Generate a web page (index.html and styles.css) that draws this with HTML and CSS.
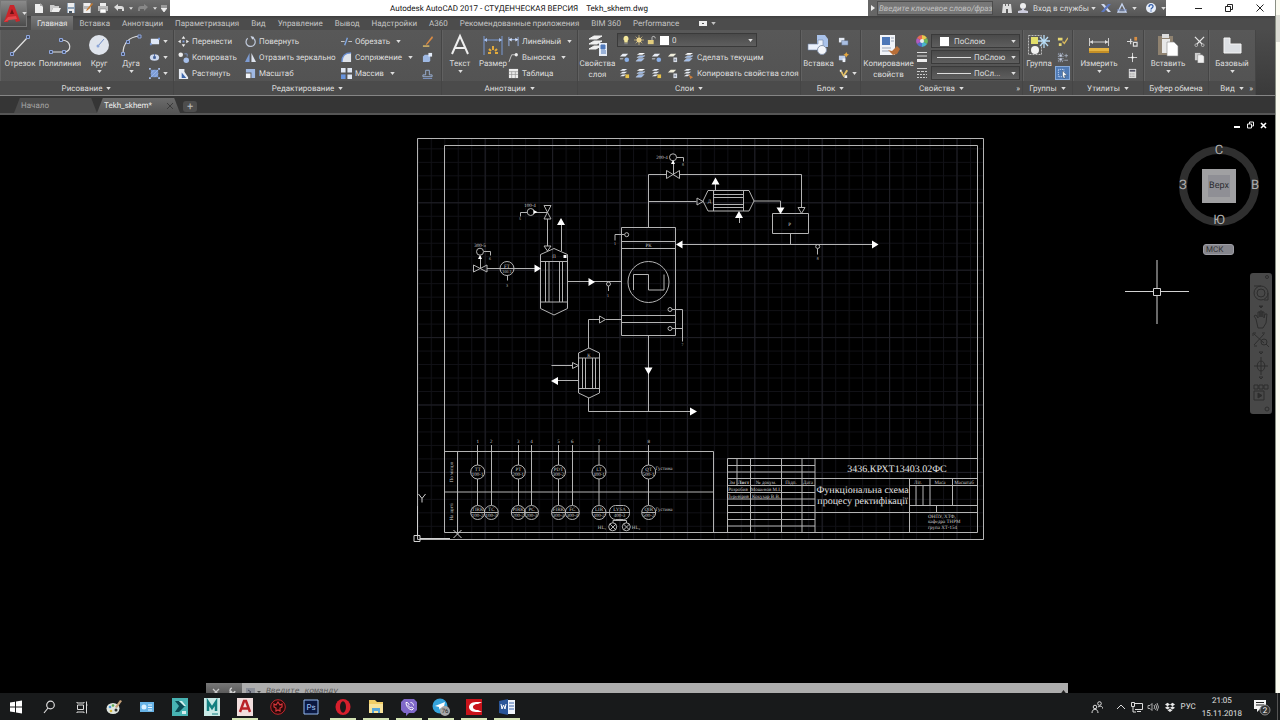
FILE: index.html
```html
<!DOCTYPE html>
<html lang="ru">
<head>
    <meta charset="UTF-8">
    <meta name="viewport" content="width=device-width, initial-scale=1.0">
    <title>Autodesk AutoCAD 2017</title>
    <link rel="stylesheet" href="styles.css">
</head>
<body>
    <!-- иконки -->
    <svg class="sprite" aria-hidden="true">
        <symbol id="down" viewBox="0 0 6 4"><path d="M0 0h6L3 4z" fill="currentColor"/></symbol>
        <symbol id="new" viewBox="0 0 12 12"><path d="M2 2h6l2 3v6H2z" fill="#eee"/><path d="M7 1l3 3H7z" fill="#aaa"/></symbol>
        <symbol id="open" viewBox="0 0 12 12"><path d="M1 3h4l1 1h4v2H4l-2 4H1z" fill="#ccc"/><path d="M4 6h8l-2 4H2z" fill="#eee"/></symbol>
        <symbol id="save" viewBox="0 0 12 12"><path d="M2 1h8v10H2z" fill="#8fa3b8"/><path d="M3 1h6v4H3zM3 7h6v4H3z" fill="#eee"/><path d="M4 9h3v2H4z" fill="#456"/></symbol>
        <symbol id="saveas" viewBox="0 0 12 12"><path d="M2 1h8v10H2z" fill="#b8b8b8"/><path d="M3 1h6v3H3zM3 7h6v4H3z" fill="#eee"/><path d="M11 1L6 7l-1 2 2-1 5-6z" fill="#c97a2c"/></symbol>
        <symbol id="print" viewBox="0 0 12 12"><path d="M3 1h6v3H3z" fill="#eee"/><path d="M1 4h10v5H1z" fill="#bbb"/><path d="M3 7h6v4H3z" fill="#fff" stroke="#777" stroke-width=".5"/></symbol>
        <symbol id="undo" viewBox="0 0 12 12"><path d="M1 5l4-3v2h3c2 0 3 1 3 3v2H9V7H5v2z" fill="#ddd"/></symbol>
        <symbol id="redo" viewBox="0 0 12 12"><path d="M11 5L7 2v2H4C2 4 1 5 1 7v2h2V7h4v2z" fill="#888"/></symbol>
        <symbol id="binoc" viewBox="0 0 12 12"><path d="M2 2h2v2h1V2h2v2h1V2h2l1 9H7V7H5v4H1z" fill="#ddd"/></symbol>
        <symbol id="person" viewBox="0 0 12 12"><circle cx="6" cy="4" r="3" fill="#eee"/><path d="M5 6h2v2l4 1v2H1V9l4-1z" fill="#ccd"/></symbol>
        <symbol id="exch" viewBox="0 0 12 12"><path d="M1 2h3l7 8H8z" fill="#cfd8ee"/><path d="M8 2h3L4 10H1z" fill="#5d78c0"/></symbol>
        <symbol id="a360" viewBox="0 0 12 12"><path d="M6 2l4 8H2z" fill="none" stroke="#c5d3ee" stroke-width="1.4"/><path d="M1 8h10" stroke="#7c93cc"/></symbol>
        <symbol id="help" viewBox="0 0 12 12"><circle cx="6" cy="6" r="5" fill="#e6edf8"/><path d="M4 5c0-3 4-3 4-.6C8 6 6 6 6 7.500M6 8.500v1" fill="none" stroke="#345ea8" stroke-width="1.3"/></symbol>

        <symbol id="line" viewBox="0 0 24 24"><path d="M4 21L20 4" stroke="#e4e4e4" stroke-width="1.200"/><path d="M2.500 19.500h3v3h-3zM18.500 2.500h3v3h-3z" fill="#42506c" stroke="#8fa6dc"/></symbol>
        <symbol id="pline" viewBox="0 0 24 24"><path d="M3 19h13c8 0 8-11-2-12" fill="none" stroke="#ddd" stroke-width="1.200"/><path d="M1.500 17.500h3v3h-3zM14.500 17.500h3v3h-3zM11.500 5.500h3v3h-3z" fill="#42506c" stroke="#8fa6dc"/></symbol>
        <symbol id="circle" viewBox="0 0 24 24"><circle cx="12" cy="12" r="10" fill="#dfe4ec"/><path d="M11 13l6-7" stroke="#6c8ac4"/><circle cx="11" cy="13" r="1.500" fill="#8ba5d8"/></symbol>
        <symbol id="arc" viewBox="0 0 24 24"><path d="M4 21C4 10 9 4 21 3" fill="none" stroke="#ddd" stroke-width="1.200"/><path d="M2.500 19.500h3v3h-3zM7.500 7.500h3v3h-3zM19 2h3v3h-3z" fill="#42506c" stroke="#8fa6dc"/></symbol>
        <symbol id="rect" viewBox="0 0 12 12"><path d="M2 3h9v6H2z" fill="#dfe8f8"/><path d="M1 8h2v2H1zM10 2h2v2h-2z" fill="#7596d8"/></symbol>
        <symbol id="ell" viewBox="0 0 12 12"><ellipse cx="6" cy="6" rx="5" ry="3.500" fill="#ccd8ee"/><path d="M6 2v4M5 5h2v2H5z" fill="#35598f" stroke="#49659c"/></symbol>
        <symbol id="hatch" viewBox="0 0 12 12"><path d="M2 2h8v8H2z" fill="#7c9cd6"/><path d="M2 6l4-4M2 10l8-8M6 10l4-4" stroke="#a9c4f2" stroke-width=".7"/><path d="M0 0h2v2H0zM10 0h2v2h-2zM0 10h2v2H0zM10 10h2v2h-2z" fill="#a5bce8"/></symbol>
        <symbol id="move" viewBox="0 0 12 12"><path d="M6 0l2 3H4zM6 12l2-3H4zM0 6l3-2v4zM12 6L9 4v4z" fill="#eee"/><path d="M5 5h2v2H5z" fill="#7fa0e0"/></symbol>
        <symbol id="copy" viewBox="0 0 12 12"><circle cx="3" cy="3" r="2.500" fill="#eee"/><circle cx="9" cy="9" r="3" fill="#a6bfea"/><path d="M7 2h3v3" fill="none" stroke="#7d97c8"/></symbol>
        <symbol id="stretch" viewBox="0 0 12 12"><path d="M1 1h6v3l4 6v2H1z" fill="#e6ebf4"/><path d="M4 5l5 6H4z" fill="#3c66ac"/></symbol>
        <symbol id="rotate" viewBox="0 0 12 12"><path d="M3 2.500A5 5 0 1 0 8.500 2" fill="none" stroke="#bcc5d6" stroke-width="1.400"/><path d="M6 0l4 1-2 3z" fill="#cdd6e6"/></symbol>
        <symbol id="mirror" viewBox="0 0 12 12"><path d="M5 1v10H0z" fill="#7d9bd2"/><path d="M7 1v10h5z" fill="#dde3ee"/></symbol>
        <symbol id="scale" viewBox="0 0 12 12"><path d="M1 1h10v10H7V5H1z" fill="#9fb8e2"/><path d="M1 6h5v5H1z" fill="#f2f5fa"/></symbol>
        <symbol id="trim" viewBox="0 0 12 12"><path d="M0 6h4M8 6h4" stroke="#ccc"/><path d="M4 10L7 2" stroke="#7fa7e4" stroke-width="1.500"/></symbol>
        <symbol id="fillet" viewBox="0 0 12 12"><path d="M1 11C1 4 5 1 11 1v10z" fill="#dfe3ea"/><path d="M1 11C1 4 5 1 11 1" fill="none" stroke="#6e93d8" stroke-width="1.500"/></symbol>
        <symbol id="array" viewBox="0 0 12 12"><path d="M0 0h5v5H0zM7 0h5v5H7zM7 7h5v5H7z" fill="#dfe6f2"/><path d="M0 7h5v5H0z" fill="#6793dc"/></symbol>
        <symbol id="pencil" viewBox="0 0 12 12"><path d="M11 0l1 2-6 7-2 1 1-2z" fill="#d98b45"/><path d="M1 11h7" stroke="#e6c068" stroke-width="1.500"/></symbol>
        <symbol id="explode" viewBox="0 0 12 12"><path d="M1 5l2-2h6v6l-1 2H1z" fill="#9eb9e4"/><path d="M7 1h4v4H7z" fill="#e4ecfa"/></symbol>
        <symbol id="offset" viewBox="0 0 12 12"><path d="M1 9.500h10V7.500H8V2.500H4v5H1z" fill="none" stroke="#9bb2d8"/><path d="M1 11.500h10" stroke="#7d97c8"/></symbol>
        <symbol id="text" viewBox="0 0 24 24"><path d="M4 21L12 3l8 18M7 15h10" fill="none" stroke="#eee" stroke-width="2"/></symbol>
        <symbol id="dim" viewBox="0 0 24 24"><path d="M3 3v19M21 3v19M3 7h18" stroke="#7b9ad4" fill="none"/><path d="M3 7l3-2v4zM21 7l-3-2v4z" fill="#a9c2f0"/><path d="M12 13v4M8 16l2 2M16 16l-2 2M7 20h3M14 20h3" stroke="#e2aa3c" stroke-width="2"/></symbol>
        <symbol id="linear" viewBox="0 0 12 12"><path d="M1 1v10M11 1v10M1 4h10" stroke="#9ab6ea" fill="none"/><path d="M1 4l3-2v4zM11 4L8 2v4z" fill="#dde8ff"/></symbol>
        <symbol id="leader" viewBox="0 0 12 12"><path d="M1 11L4 3h4" fill="none" stroke="#ccc"/><circle cx="9" cy="3" r="1.800" fill="#eee"/></symbol>
        <symbol id="table" viewBox="0 0 12 12"><path d="M1 1h10v10H1z" fill="#eee"/><path d="M1 4h10M1 7h10M4 4v7M8 4v7" stroke="#8b8b8b" stroke-width=".7"/></symbol>
        <symbol id="layers" viewBox="0 0 24 24"><path d="M3 6l5-3h8l-5 3zM3 11l5-3h8l-5 3zM3 16l5-3h7l-5 3z" fill="#f0f0f0" stroke="#f0f0f0"/><path d="M13 10h8v13h-8z" fill="#e6ecf6"/><path d="M15 12h4v4h-4zM15 18h5M15 20h5" fill="#4f78ba" stroke="#4f78ba"/></symbol>
        <symbol id="bulb" viewBox="0 0 12 12"><path d="M6 1a3.500 3.500 0 0 1 2 6v2H4V7a3.500 3.500 0 0 1 2-6z" fill="#f4e79b"/><path d="M4 10h4v1H4z" fill="#999"/></symbol>
        <symbol id="sun" viewBox="0 0 12 12"><circle cx="6" cy="6" r="3" fill="#f0d890"/><path d="M6 0v12M0 6h12M2 2l8 8M10 2l-8 8" stroke="#e6cd86" stroke-width=".8"/></symbol>
        <symbol id="lock" viewBox="0 0 12 12"><path d="M1 6h7v5H1z" fill="#e2cd7e"/><path d="M6 6V3c0-2 4-2 4 1" fill="none" stroke="#ccc"/></symbol>
        <symbol id="lay1" viewBox="0 0 12 12"><path d="M1 5l3-3h6L7 5zM1 7h4l-1 1H1z" fill="#e8edf6"/><circle cx="8.500" cy="8.500" r="2.500" fill="#8bb0e8"/></symbol>
        <symbol id="lay2" viewBox="0 0 12 12"><path d="M1 3l3-2h5L6 3zM1 6l3-2h5L6 6zM1 9l3-2h4L5 9z" fill="#e8edf6"/><path d="M7 7h4v4H7z" fill="#e8c24b"/></symbol>
        <symbol id="lay3" viewBox="0 0 12 12"><path d="M1 5l3-3h6L7 5z" fill="#f0eedc"/><path d="M7 6h4v5H7z" fill="#d9dee8"/><path d="M8 7.500h2v2H8z" fill="#8b96a8"/></symbol>
        <symbol id="lay4" viewBox="0 0 12 12"><path d="M2 3l3-2h6L8 3z" fill="#fff"/><path d="M2 6l3-2h6L8 6zM1 10l3-3h6l-3 3z" fill="#9cb9e6" stroke="#dce6f8" stroke-width=".4"/></symbol>
        <symbol id="lay5" viewBox="0 0 12 12"><path d="M1 3l3-2h5L6 3zM1 6l3-2h5L6 6zM1 9l3-2h4L5 9z" fill="#e8edf6"/><path d="M6 7l5 3-3 2z" fill="#cc7e3c"/></symbol>
        <symbol id="insert" viewBox="0 0 24 24"><path d="M10 2h8l3 4v8H10z" fill="#a9c2ea"/><path d="M1 11h10V7h5v10H1z" fill="#eaf0fa" stroke="#7084a6" stroke-width=".6"/><circle cx="15" cy="17" r="4.500" fill="#f4f6fa" stroke="#8594ac"/></symbol>
        <symbol id="blk1" viewBox="0 0 12 12"><path d="M1 2h6v5H1z" fill="#e4eaf4"/><path d="M4 5h7v5H4z" fill="#a9bfe2" stroke="#53627c" stroke-width=".5"/></symbol>
        <symbol id="blk2" viewBox="0 0 12 12"><path d="M1 4h7v5H1z" fill="#bccdea"/><path d="M5 7h3v4H5z" fill="#edf2fa"/><path d="M9 0l1 2 2 1-2 1-1 2-1-2-2-1 2-1z" fill="#e5a73e"/></symbol>
        <symbol id="blk3" viewBox="0 0 12 12"><path d="M2 3l3 1 1 3 3-5 2 1-5 7z" fill="#e3c168"/><path d="M2 2h2v2H2zM7 8h3v3H7z" fill="#eee"/></symbol>
        <symbol id="match" viewBox="0 0 24 24"><path d="M3 2h15v20H3z" fill="#f2f4f8"/><path d="M5 4h8v8H5z" fill="#4d77b8"/><path d="M14 5h3M14 8h3M5 15h9M5 18h7" stroke="#9aa5b8"/><path d="M11 17l5 5 4-1 3-5-3-3-5 5z" fill="#b76e38"/></symbol>
        <symbol id="wheel" viewBox="0 0 12 12"><path d="M6 6V0a6 6 0 0 1 5 3z" fill="#eac84c"/><path d="M6 6l5-3a6 6 0 0 1 0 6z" fill="#6cb65c"/><path d="M6 6l5 3a6 6 0 0 1-5 3z" fill="#4ab4cc"/><path d="M6 6v6a6 6 0 0 1-5-3z" fill="#5072cc"/><path d="M6 6L1 9a6 6 0 0 1 0-6z" fill="#b05ac0"/><path d="M6 6L1 3a6 6 0 0 1 5-3z" fill="#e46a58"/><circle cx="6" cy="6" r="2" fill="#eee"/></symbol>
        <symbol id="weight" viewBox="0 0 12 12"><path d="M1 1.500h10M1 5h10" stroke="#ddd"/><path d="M1 9.500h10" stroke="#eee" stroke-width="3"/></symbol>
        <symbol id="ltype" viewBox="0 0 12 12"><path d="M1 1.500h10" stroke="#ccc"/><path d="M1 4.500h10" stroke="#ccc" stroke-dasharray="3 1"/><path d="M1 7.500h10M1 10.500h10" stroke="#ccc" stroke-dasharray="2 1"/></symbol>
        <symbol id="group" viewBox="0 0 24 24"><path d="M1.500 2.500h13v19h-13z" fill="none" stroke="#bbb" stroke-dasharray="2 1"/><path d="M4 4h7v7H4z" fill="#e2de6a"/><circle cx="8" cy="17" r="4" fill="#f2f2f2"/><path d="M17 2v13M11 8h12M13 4l8 9M21 4l-8 9" stroke="#b7dcf6" stroke-width="1.300"/></symbol>
        <symbol id="ungroup" viewBox="0 0 12 12"><path d="M1 2h5v3H1zM2 8h3v3H2z" fill="#e5d673"/><path d="M6 6l2 2 4-6" fill="none" stroke="#d9b95c" stroke-width="1.500"/></symbol>
        <symbol id="gedit" viewBox="0 0 12 12"><path d="M1.500 1.500h5v9h-5z" fill="none" stroke="#a9b5cc" stroke-dasharray="1 1"/><path d="M3 3h2v2H3zM3 7h2v2H3zM8 4h4M10 2v4M8 9h4" fill="#ccd" stroke="#bcc8dc" stroke-width=".7"/></symbol>
        <symbol id="gsel" viewBox="0 0 12 12"><path d="M1.500 1.500h6v8h-6z" fill="none" stroke="#d8e6ff" stroke-dasharray="1 1"/><path d="M6 3l5 5H8l1 3-2 0-1-3z" fill="#fff" stroke="#345" stroke-width=".5"/></symbol>
        <symbol id="measure" viewBox="0 0 24 24"><path d="M2.500 5v8M21.500 5v8M3 9h18" stroke="#ccc"/><path d="M3 9l3-2v4zM21 9l-3-2v4z" fill="#ddd"/><path d="M2 15h20v5H2z" fill="#e5b443"/><path d="M2 18h20v2H2z" fill="#c48f26"/></symbol>
        <symbol id="quick" viewBox="0 0 12 12"><path d="M0 6h6M4 3v6M7 7h4v4H7z" fill="none" stroke="#ddd" stroke-width="1.300"/><path d="M8 1h3v4H8z" fill="#d88e44"/></symbol>
        <symbol id="point" viewBox="0 0 12 12"><path d="M6 1v10M1 6h10" stroke="#ddd"/><path d="M5 5h2v2H5z" fill="#fff"/></symbol>
        <symbol id="calc" viewBox="0 0 12 12"><path d="M2 1h8v10H2z" fill="#ddd"/><path d="M3 2h6v2H3z" fill="#556"/><path d="M3 6.500h6M3 9h6" stroke="#777" stroke-dasharray="1 1"/></symbol>
        <symbol id="paste" viewBox="0 0 24 24"><path d="M2 3h15v19H2z" fill="#8f8270"/><path d="M6 1h7v4H6z" fill="#ddd"/><path d="M6 6h8v14H6z" fill="#e8e8e8"/><path d="M11 9h7l4 4v10H11z" fill="#fff" stroke="#888" stroke-width=".6"/></symbol>
        <symbol id="cut" viewBox="0 0 12 12"><path d="M1 1l8 8M11 1L3 9" stroke="#e6e6e6" stroke-width="1.300"/><circle cx="2.500" cy="10" r="1.500" fill="none" stroke="#bbb"/><circle cx="9.500" cy="10" r="1.500" fill="none" stroke="#bbb"/></symbol>
        <symbol id="copyclip" viewBox="0 0 12 12"><path d="M1 1h6v8H1z" fill="#ccc"/><path d="M4 3h5l2 2v7H4z" fill="#f0f0f0" stroke="#777" stroke-width=".5"/></symbol>
        <symbol id="base" viewBox="0 0 24 24"><path d="M4 5h6v6h11v9H4z" fill="#dcdfe3" stroke="#f5f5f5"/></symbol>
    </svg>

    <div class="screen">
        <main class="app">
            <header class="top">
                <button class="app-button" aria-label="Меню приложения">
                    <svg width="18" height="20" viewBox="0 0 18 20"><path d="M1 18L7 1h4l6 16-4 1-2-5H6l-1 5z" fill="#c9262b"/><path d="M7 10l2-5 2 5z" fill="#6d1216"/><path d="M1 18l4-5 8-1 1 3-8 1z" fill="#e3474b"/></svg>
                    <svg class="arrow"><use href="#down"/></svg>
                </button>
                <div class="top-main">
                    <div class="titlebar">
                        <div class="quick">
                            <button aria-label="Создать"><svg class="ic"><use href="#new"/></svg></button>
                            <button aria-label="Открыть"><svg class="ic"><use href="#open"/></svg></button>
                            <button aria-label="Сохранить"><svg class="ic"><use href="#save"/></svg></button>
                            <button aria-label="Сохранить как"><svg class="ic"><use href="#saveas"/></svg></button>
                            <button aria-label="Печать"><svg class="ic"><use href="#print"/></svg></button>
                            <button aria-label="Отменить"><svg class="ic"><use href="#undo"/></svg></button>
                            <svg class="arrow"><use href="#down"/></svg>
                            <button aria-label="Повторить"><svg class="ic"><use href="#redo"/></svg></button>
                            <svg class="arrow"><use href="#down"/></svg>
                            <svg class="arrow more" viewBox="0 0 6 7"><path d="M0 1h6M0 3h6l-3 4z" fill="#eee" stroke="#eee" stroke-width=".8"/></svg>
                        </div>
                        <div class="title"><span>Autodesk AutoCAD 2017 - СТУДЕНЧЕСКАЯ ВЕРСИЯ</span><span>Tekh_skhem.dwg</span></div>
                        <div class="info">
                            <button class="expand" aria-label="Свернуть поиск"><svg width="4" height="6" viewBox="0 0 4 6"><path d="M0 0l4 3-4 3z" fill="#eee"/></svg></button>
                            <input type="text" placeholder="Введите ключевое слово/фразу" aria-label="Поиск">
                            <svg class="ic"><use href="#binoc"/></svg>
                            <svg class="ic"><use href="#person"/></svg>
                            <button class="login">Вход в службы <svg class="arrow"><use href="#down"/></svg></button>
                            <svg class="ic"><use href="#exch"/></svg>
                            <svg class="ic"><use href="#a360"/></svg>
                            <svg class="arrow"><use href="#down"/></svg>
                            <svg class="ic help"><use href="#help"/></svg>
                            <svg class="arrow"><use href="#down"/></svg>
                        </div>
                        <div class="window-btns">
                            <button aria-label="Свернуть"><svg width="8" height="8"><path d="M0 4.500h7" stroke="#222"/></svg></button>
                            <button aria-label="Восстановить"><svg width="8" height="8"><path d="M.5 2.500h5v5h-5zM2.500 2V.5h5v5H6" fill="none" stroke="#222"/></svg></button>
                            <button aria-label="Закрыть"><svg width="8" height="8"><path d="M.5.5l7 7M7.500.5l-7 7" stroke="#222"/></svg></button>
                        </div>
                    </div>
                    <nav class="tabs">
                        <button class="on">Главная</button>
                        <button>Вставка</button>
                        <button>Аннотации</button>
                        <button>Параметризация</button>
                        <button>Вид</button>
                        <button>Управление</button>
                        <button>Вывод</button>
                        <button>Надстройки</button>
                        <button>A360</button>
                        <button>Рекомендованные приложения</button>
                        <button>BIM 360</button>
                        <button>Performance</button>
                        <button class="ribbon-mode" aria-label="Вид ленты"><svg width="8" height="5"><path d="M0 0h8v5H0z" fill="#eee"/><path d="M3 2h2v1H3z" fill="#555"/></svg><svg class="arrow"><use href="#down"/></svg></button>
                    </nav>
                </div>
            </header>

            <section class="ribbon">
                <div class="panel draw">
                    <div class="tools">
                        <button class="big"><svg><use href="#line"/></svg>Отрезок</button>
                        <button class="big"><svg><use href="#pline"/></svg>Полилиния</button>
                        <button class="big"><svg><use href="#circle"/></svg>Круг<svg class="arrow"><use href="#down"/></svg></button>
                        <button class="big"><svg><use href="#arc"/></svg>Дуга<svg class="arrow"><use href="#down"/></svg></button>
                        <div class="col">
                            <button class="small" aria-label="Прямоугольник"><svg class="ic"><use href="#rect"/></svg><svg class="arrow"><use href="#down"/></svg></button>
                            <button class="small" aria-label="Эллипс"><svg class="ic"><use href="#ell"/></svg><svg class="arrow"><use href="#down"/></svg></button>
                            <button class="small" aria-label="Штриховка"><svg class="ic"><use href="#hatch"/></svg><svg class="arrow"><use href="#down"/></svg></button>
                        </div>
                    </div>
                    <h2>Рисование <svg><use href="#down"/></svg></h2>
                </div>
                <div class="panel modify">
                    <div class="tools">
                        <div class="col">
                            <button class="small"><svg class="ic"><use href="#move"/></svg>Перенести</button>
                            <button class="small"><svg class="ic"><use href="#copy"/></svg>Копировать</button>
                            <button class="small"><svg class="ic"><use href="#stretch"/></svg>Растянуть</button>
                        </div>
                        <div class="col">
                            <button class="small"><svg class="ic"><use href="#rotate"/></svg>Повернуть</button>
                            <button class="small"><svg class="ic"><use href="#mirror"/></svg>Отразить зеркально</button>
                            <button class="small"><svg class="ic"><use href="#scale"/></svg>Масштаб</button>
                        </div>
                        <div class="col">
                            <button class="small"><svg class="ic"><use href="#trim"/></svg>Обрезать<svg class="arrow"><use href="#down"/></svg></button>
                            <button class="small"><svg class="ic"><use href="#fillet"/></svg>Сопряжение<svg class="arrow"><use href="#down"/></svg></button>
                            <button class="small"><svg class="ic"><use href="#array"/></svg>Массив<svg class="arrow"><use href="#down"/></svg></button>
                        </div>
                        <div class="col">
                            <button class="small" aria-label="Стереть"><svg class="ic"><use href="#pencil"/></svg></button>
                            <button class="small" aria-label="Расчленить"><svg class="ic"><use href="#explode"/></svg></button>
                            <button class="small" aria-label="Смещение"><svg class="ic"><use href="#offset"/></svg></button>
                        </div>
                    </div>
                    <h2>Редактирование <svg><use href="#down"/></svg></h2>
                </div>
                <div class="panel annot">
                    <div class="tools">
                        <button class="big"><svg><use href="#text"/></svg>Текст<svg class="arrow"><use href="#down"/></svg></button>
                        <button class="big"><svg><use href="#dim"/></svg>Размер</button>
                        <div class="col">
                            <button class="small"><svg class="ic"><use href="#linear"/></svg>Линейный<svg class="arrow"><use href="#down"/></svg></button>
                            <button class="small"><svg class="ic"><use href="#leader"/></svg>Выноска<svg class="arrow"><use href="#down"/></svg></button>
                            <button class="small"><svg class="ic"><use href="#table"/></svg>Таблица</button>
                        </div>
                    </div>
                    <h2>Аннотации <svg><use href="#down"/></svg></h2>
                </div>
                <div class="panel layer">
                    <div class="tools">
                        <button class="big"><svg><use href="#layers"/></svg>Свойства слоя</button>
                        <div class="col">
                            <div class="combo">
                                <svg class="ic"><use href="#bulb"/></svg><svg class="ic"><use href="#sun"/></svg><svg class="ic"><use href="#lock"/></svg><i class="swatch"></i>
                                <select aria-label="Слой"><option>0</option></select><svg class="arrow"><use href="#down"/></svg>
                            </div>
                            <div class="row">
                                <button class="small" aria-label="Отключить"><svg class="ic"><use href="#lay1"/></svg></button>
                                <button class="small" aria-label="Изолировать"><svg class="ic"><use href="#lay4"/></svg></button>
                                <button class="small" aria-label="Заморозить"><svg class="ic"><use href="#lay1"/></svg></button>
                                <button class="small" aria-label="Блокировать"><svg class="ic"><use href="#lay3"/></svg></button>
                                <button class="small"><svg class="ic"><use href="#lay4"/></svg>Сделать текущим</button>
                            </div>
                            <div class="row">
                                <button class="small" aria-label="Включить все слои"><svg class="ic"><use href="#lay2"/></svg></button>
                                <button class="small" aria-label="Отключить изоляцию"><svg class="ic"><use href="#lay4"/></svg></button>
                                <button class="small" aria-label="Разморозить"><svg class="ic"><use href="#lay2"/></svg></button>
                                <button class="small" aria-label="Разблокировать"><svg class="ic"><use href="#lay3"/></svg></button>
                                <button class="small"><svg class="ic"><use href="#lay5"/></svg>Копировать свойства слоя</button>
                            </div>
                        </div>
                    </div>
                    <h2>Слои <svg><use href="#down"/></svg></h2>
                </div>
                <div class="panel block">
                    <div class="tools">
                        <button class="big"><svg><use href="#insert"/></svg>Вставка</button>
                        <div class="col">
                            <button class="small" aria-label="Создать блок"><svg class="ic"><use href="#blk1"/></svg></button>
                            <button class="small" aria-label="Редактор блоков"><svg class="ic"><use href="#blk2"/></svg></button>
                            <button class="small" aria-label="Атрибуты"><svg class="ic"><use href="#blk3"/></svg><svg class="arrow"><use href="#down"/></svg></button>
                        </div>
                    </div>
                    <h2>Блок <svg><use href="#down"/></svg></h2>
                </div>
                <div class="panel props">
                    <div class="tools">
                        <button class="big"><svg><use href="#match"/></svg>Копирование свойств</button>
                        <div class="col">
                            <div class="row"><svg class="ic"><use href="#wheel"/></svg><div class="combo"><i class="swatch"></i><select aria-label="Цвет"><option>ПоСлою</option></select><svg class="arrow"><use href="#down"/></svg></div></div>
                            <div class="row"><svg class="ic"><use href="#weight"/></svg><div class="combo"><i class="rule"></i><select aria-label="Вес линий"><option>ПоСлою</option></select><svg class="arrow"><use href="#down"/></svg></div></div>
                            <div class="row"><svg class="ic"><use href="#ltype"/></svg><div class="combo"><i class="rule"></i><select aria-label="Тип линий"><option>ПоСл...</option></select><svg class="arrow"><use href="#down"/></svg></div></div>
                        </div>
                    </div>
                    <h2>Свойства <svg><use href="#down"/></svg><a class="launch" href="#" aria-label="Палитра свойств">»</a></h2>
                </div>
                <div class="panel groups">
                    <div class="tools">
                        <button class="big"><svg><use href="#group"/></svg>Группа</button>
                        <div class="col">
                            <button class="small" aria-label="Разгруппировать"><svg class="ic"><use href="#ungroup"/></svg></button>
                            <button class="small" aria-label="Редактировать группу"><svg class="ic"><use href="#gedit"/></svg></button>
                            <button class="small pressed" aria-label="Выбор группы"><svg class="ic"><use href="#gsel"/></svg></button>
                        </div>
                    </div>
                    <h2>Группы <svg><use href="#down"/></svg></h2>
                </div>
                <div class="panel utils">
                    <div class="tools">
                        <button class="big"><svg><use href="#measure"/></svg>Измерить<svg class="arrow"><use href="#down"/></svg></button>
                        <div class="col">
                            <button class="small" aria-label="Быстрый выбор"><svg class="ic"><use href="#quick"/></svg></button>
                            <button class="small" aria-label="Точка"><svg class="ic"><use href="#point"/></svg></button>
                            <button class="small" aria-label="Калькулятор"><svg class="ic"><use href="#calc"/></svg></button>
                        </div>
                    </div>
                    <h2>Утилиты <svg><use href="#down"/></svg></h2>
                </div>
                <div class="panel clip">
                    <div class="tools">
                        <button class="big"><svg><use href="#paste"/></svg>Вставить<svg class="arrow"><use href="#down"/></svg></button>
                        <div class="col">
                            <button class="small" aria-label="Вырезать"><svg class="ic"><use href="#cut"/></svg></button>
                            <button class="small" aria-label="Копировать"><svg class="ic"><use href="#copyclip"/></svg></button>
                        </div>
                    </div>
                    <h2>Буфер обмена</h2>
                </div>
                <div class="panel view">
                    <div class="tools">
                        <button class="big"><svg><use href="#base"/></svg>Базовый<svg class="arrow"><use href="#down"/></svg></button>
                    </div>
                    <h2>Вид <svg><use href="#down"/></svg><a class="launch" href="#" aria-label="Параметры вида">»</a></h2>
                </div>
            </section>

            <nav class="files">
                <button class="file">Начало</button>
                <button class="file on">Tekh_skhem* <svg width="6" height="6"><path d="M0 0l6 6M6 0L0 6" stroke="#3c3c3c"/></svg></button>
                <button class="add" aria-label="Новый чертеж">+</button>
            </nav>

            <section class="canvas">
                <svg class="drawing" viewBox="0 115 1275 578" preserveAspectRatio="xMidYMid slice">
                    <defs>
                        <pattern id="minor" x="417.3" y="539.3" width="13.48" height="13.48" patternUnits="userSpaceOnUse"><path d="M0 .5h13.480M.5 0v13.480" stroke="#111116"/></pattern>
                        <pattern id="major" x="417.3" y="539.3" width="67.4" height="67.4" patternUnits="userSpaceOnUse"><path d="M0 .5h67.400M.5 0v67.400" stroke="#1f1f26"/></pattern>
                    </defs>
                    <rect x="417" y="138" width="567" height="401" fill="url(#minor)"/>
                    <rect x="417" y="138" width="567" height="401" fill="url(#major)"/>

                    <g class="ln">
                        <!-- рамка -->
                        <path d="M417.500 138.500h566v401h-566zM444.500 145.500h533v387h-533z"/>
                        <!-- колонна -->
                        <path d="M621.500 227.500h54v108h-54zM621.500 241.500h54M621.500 248.500h54M621.500 315.500h54M621.500 322.500h54"/>
                        <circle cx="648.5" cy="282" r="20.5"/>
                        <path d="M633.500 290v-15.500h15V290h15.500v-15.500"/>
                        <circle cx="626.700" cy="234.700" r="2"/><path d="M624.500 234.500h-9.500v6"/>
                        <circle cx="670" cy="309.500" r="2"/><circle cx="670" cy="328.500" r="2"/>
                        <path d="M672 309.500h10.500v32M672 328.500h10.500"/>
                        <!-- верхняя линия -->
                        <path d="M648.500 227.500V174.500H666M680 174.500h121.500V208M666.500 170.500v8l13-8v8zM673.500 174.500V161"/>
                        <circle cx="673" cy="157.300" r="3.500"/><path d="M676.500 157.500h7v4"/>
                        <path d="M798 207.500h7l-3.500 6z"/>
                        <path d="M648.500 201.500h48M697 198l6 3.500-6 3.500z"/>
                        <!-- дефлегматор -->
                        <path d="M703 201l5-10.500h41l5 10.500-5 10h-41zM713.500 190.500v20.500M743.500 190.500v20.500M713.500 194.500h30M713.500 197.500h30M713.500 204.500h30M713.500 207.500h30M715.500 184v6.500M739.500 217v6M754 201h26.500v7"/>
                        <!-- приемник -->
                        <path d="M772.500 213.500h36v20h-36zM790.500 233.500v11M682 244.500h191"/>
                        <circle cx="817.700" cy="246.500" r="2"/><path d="M817.500 248.500v6"/>
                        <!-- подогреватель -->
                        <path d="M540.500 254.500l13.500-6 13.500 6v54l-13.500 6.500-13.500-6.500zM540.500 261.500h27M540.500 302h27M545.500 261.500V302M549 261.500V302M559.500 261.500V302M562.500 261.500V302"/>
                        <path d="M561.500 225v26M547.500 219v27M544 205.500h7l-7 13.500h7zM544 246h7l-3.500 5zM534 212.500h13"/>
                        <circle cx="530.700" cy="212" r="3.500"/><path d="M527 212.500h-6.500v4"/>
                        <circle cx="480" cy="251.700" r="3.500"/><path d="M484 251.500h6.500v4M480.500 256v12M473.500 265v7l13.500-7v7zM487 268.500h13"/>
                        <circle cx="507" cy="268.500" r="7"/><path d="M514 268.500h21M507.500 275.500v5M500 268.500h14"/>
                        <path d="M567.500 281.500h54"/><circle cx="608.500" cy="284" r="2"/><path d="M608.500 286v5"/>
                        <!-- кипятильник -->
                        <path d="M578.500 353l10.500-5 10.500 5v40l-10.500 5-10.500-5zM578.500 358h21M578.500 388.500h21M582.500 358v30M585.500 358v30M592.500 358v30M595.500 358v30"/>
                        <path d="M588.500 348v-28.500H599M606 319.500h15M599.500 316l6 3.500-6 3.500zM551.500 365.500h21M572.500 362.500l6 3-6 3zM558 380.500h20.500M588.500 398v13.500h102M648.500 335.500v76"/>
                        <!-- таблица приборов -->
                        <path d="M444.500 451.500h269v81M444.500 492h269M457.500 451.500v81"/>
                        <path d="M477.500 445v20M477.500 479v26M491.500 445v60M518.500 445v20M518.500 479v26M531.500 445v60M558.500 445v20M558.500 479v26M572.500 445v60M599 445v20M599 479v26M648.500 445v20M648.500 479v26"/>
                        <circle cx="477.700" cy="472" r="7"/><circle cx="518.300" cy="472" r="7"/><circle cx="558.500" cy="472" r="7"/><circle cx="599" cy="472" r="7"/><circle cx="648.700" cy="472" r="7"/>
                        <circle cx="477.700" cy="512.500" r="7"/><circle cx="491.300" cy="512.500" r="7"/><circle cx="518.300" cy="512.500" r="7"/><circle cx="531.500" cy="512.500" r="7"/><circle cx="558.500" cy="512.500" r="7"/><circle cx="572.300" cy="512.500" r="7"/><circle cx="599" cy="512.500" r="7"/><circle cx="648.700" cy="512.500" r="7"/>
                        <rect x="609.500" y="505.500" width="20" height="14" rx="6"/>
                        <path d="M471 512.500h27M511 512.500h27M552 512.500h27M592 512.500h38M642 512.500h14M613 523v-2.500h13.500v2.500"/>
                        <circle cx="612.700" cy="526.800" r="4"/><circle cx="626.300" cy="526.800" r="4"/>
                        <path d="M610 524l6 6M616 524l-6 6M623.500 524l6 6M629.500 524l-6 6"/>
                        <!-- штамп -->
                        <path d="M727.500 532.500v-74h250M815 458.500v74M727.500 465.500H815M727.500 472H815M727.500 478.500h250M727.500 485.500H815M727.500 492.500H815M727.500 499H815M727.500 505.500H815M727.500 512.500h250M727.500 519.500H815M727.500 526H815"/>
                        <path d="M737 458.500v27M750.500 458.500v74M781.500 458.500v74M802 458.500v74M909.500 478.500v54M909.500 485.500h68M909.500 505.500h68M930 478.500v27M952.500 478.500v27M916 485.500v20M923 485.500v20M936.500 505.500v7"/>
                    </g>
                    <g fill="#fff">
                        <path d="M715.500 177.500l4 7h-8zM739 211l4 7h-8zM776.500 207.500h8l-4 6.500zM676 244.500l6.500-4v8zM878.500 244.500l-6.500-4v8zM561 218l4 7h-8zM541 268.500l-6.500-4v8zM595 282l-6.500-4v8zM551 381l7-4v8zM697 411.500l-7-4v8zM648.500 374.500l-4-7h8z"/>
                        <path d="M673 160l2 4h-4zM480 255l2 4h-4zM537.500 212l-4-2v4zM563.500 255h3v3h-3z"/>
                    </g>
                    <g class="tiny">
                        <text class="mid" x="662" y="159">200-4</text><text x="683" y="166">8</text>
                        <text class="mid" x="530" y="207">100-4</text><text x="520" y="220">5</text>
                        <text class="mid" x="480" y="247">300-5</text><text x="490" y="260">6</text><text class="mid" x="507" y="268">FT</text><text x="507" y="273">100-1</text><text x="507" y="287">3</text>
                        <text x="615" y="245">1</text><text x="608" y="297">1</text><text x="682.500" y="346">7</text><text x="817.700" y="260">8</text>
                        <text class="mid" x="648.500" y="247">РК</text><text class="mid" x="554" y="258">П</text><text class="mid" x="589" y="357">К</text><text class="mid" x="709.500" y="203">Д</text><text class="mid" x="789.700" y="226">Р</text>
                        <text class="mid" x="477.700" y="443">1</text><text class="mid" x="491.300" y="443">2</text><text class="mid" x="518.300" y="443">3</text><text class="mid" x="531.500" y="443">4</text><text class="mid" x="558.500" y="443">5</text><text class="mid" x="572.300" y="443">6</text><text class="mid" x="599" y="443">7</text><text class="mid" x="648.700" y="443">8</text>
                        <text class="mid" x="477.700" y="471">TT</text><text class="mid" x="477.700" y="476">100-1</text>
                        <text class="mid" x="518.300" y="471">PT</text><text class="mid" x="518.300" y="476">200-1</text>
                        <text class="mid" x="558.500" y="471">PDT</text><text class="mid" x="558.500" y="476">300-2</text>
                        <text class="mid" x="599" y="471">LT</text><text class="mid" x="599" y="476">400-1</text>
                        <text class="mid" x="648.700" y="471">QT</text><text class="mid" x="648.700" y="476">500-1</text>
                        <text class="mid" x="477.700" y="511">TIRK</text><text class="mid" x="477.700" y="517">100-2</text><text class="mid" x="491.300" y="511">TC</text><text class="mid" x="491.300" y="517">100-3</text>
                        <text class="mid" x="518.300" y="511">PIRK</text><text class="mid" x="518.300" y="517">200-2</text><text class="mid" x="531.500" y="511">PC</text><text class="mid" x="531.500" y="517">200-3</text>
                        <text class="mid" x="558.500" y="511">FIRK</text><text class="mid" x="558.500" y="517">300-3</text><text class="mid" x="572.300" y="511">FC</text><text class="mid" x="572.300" y="517">300-4</text>
                        <text class="mid" x="599" y="511">LIR</text><text class="mid" x="599" y="517">400-2</text><text class="mid" x="619.500" y="511">LYSA</text><text class="mid" x="619.500" y="517">400-3</text>
                        <text class="mid" x="648.700" y="511">QIR</text><text class="mid" x="648.700" y="517">500-2</text>
                        <text class="mid" x="602" y="529">HL₁</text><text class="mid" x="636" y="529">HL₂</text>
                        <text class="mid" x="664" y="470">Густина</text><text class="mid" x="664" y="511">Густина</text>
                        <text class="mid" transform="rotate(-90 453 472)" x="453" y="472">По місцю</text><text class="mid" transform="rotate(-90 453 512)" x="453" y="512">На щиті</text>
                        <text class="mid" x="732" y="484">Зм</text><text class="mid bold" x="743.500" y="484">Лист</text><text class="mid" x="766" y="484">№ докум.</text><text class="mid" x="791" y="484">Підп.</text><text class="mid" x="808" y="484">Дата</text>
                        <text class="mid" x="738" y="491">Розробив</text><text class="mid" x="766" y="491">Мошенов М.І.</text><text class="mid" x="738" y="498">Перевірив</text><text class="mid" x="766" y="498">Кокухар В.В.</text>
                        <text class="mid" x="918" y="484">Літ.</text><text class="mid" x="940" y="484">Маса</text><text class="mid" x="964" y="484">Масштаб</text>
                        <text class="org" x="928" y="518">ОНПУ, ХТФ,</text><text class="org" x="928" y="523">кафедра ТНРМ</text><text class="org" x="928" y="529">група ХТ-154</text>
                    </g>
                    <g class="stamp">
                        <text x="897" y="472">3436.КРХТ13403.02ФС</text>
                        <text x="862.500" y="493">Функціональна схема</text>
                        <text x="862.500" y="504">процесу ректифікації</text>
                    </g>
                    <!-- ПСК и курсор -->
                    <path class="ucs" d="M414 535.500h6v6h-6zM420 538.500h30M417.500 536v-30M453.500 530l8 8M461.500 530l-8 8M418.500 494l3.500 4.500 3.500-4.500M422 498.500v4"/>
                    <path class="ucs" d="M1153.500 288.500h7v7h-7zM1125 291.500h28M1161 291.500h28M1157 260v28M1157 296v28"/>
                </svg>

                <div class="mdi">
                    <button aria-label="Свернуть"><svg width="7" height="8"><path d="M0 6h6" stroke="#fff" stroke-width="2"/></svg></button>
                    <button aria-label="Развернуть"><svg width="7" height="8"><path d="M.5 3h4v4h-4zM2.500 3V1h4v4H5" fill="none" stroke="#eee"/></svg></button>
                    <button aria-label="Закрыть"><svg width="7" height="8"><path d="M1 2l5 5M6 2L1 7" stroke="#fff" stroke-width="1.600"/></svg></button>
                </div>
                <div class="cube">
                    <span class="n">С</span><span class="w">З</span>
                    <button class="face">Верх</button>
                    <span class="e">В</span><span class="s">Ю</span>
                </div>
                <button class="ucs-name">МСК</button>
                <div class="navbar">
                    <svg viewBox="0 0 22 140" fill="none" stroke="#2d2d2d">
                        <circle cx="17" cy="4" r="1.500"/><circle cx="11" cy="20" r="7"/><circle cx="11" cy="20" r="4"/><path d="M4 13h7M18 20v7h-4"/><path d="M9 33h4l-2 2z" fill="#2d2d2d"/>
                        <path d="M6 46l-2-3 2-1 2 3v-6l2 0v5-6h2v6-5h2v6l1-4h2l-1 9-3 5H8z"/>
                        <path d="M4 61l10 9M14 61L4 72M3 60h3M3 60v3M15 60h-3M4 73h3"/><circle cx="14" cy="69" r="3"/><path d="M16 71l3 3M9 79h4l-2 2z"/>
                        <path d="M11 84v18M4 93h14M11 88c5 0 5 10 0 10s-5-10 0-10M9 104h4l-2 2z"/>
                        <path d="M4 118h10v9H4zM4 112h4v4H4zM9 112h4v4H9zM14 112h4v4h-4z"/><path d="M8 120l4 2.500-4 2.500z" fill="#2d2d2d"/><circle cx="17" cy="136" r="2"/>
                    </svg>
                </div>
                <div class="command">
                    <div class="command-tools"><svg width="8" height="8"><path d="M1 1l6 6M7 1L1 7" stroke="#ccc" stroke-width="1.300"/></svg><svg width="9" height="9"><path d="M1 8l4-4M5 1a2.500 2.500 0 1 0 3 3" fill="none" stroke="#ccc" stroke-width="1.500"/></svg></div>
                    <svg class="prompt" width="16" height="8"><path d="M0 0h9v8H0z" fill="#8b8f98"/><path d="M2 2l3 2-3 2" fill="none" stroke="#445"/><path d="M11 3h4l-2 2z" fill="#444"/></svg>
                    <input type="text" placeholder="Введите команду" aria-label="Командная строка">
                    <svg class="arrow up" viewBox="0 0 6 4"><path d="M0 4h6L3 0z" fill="#222"/></svg>
                </div>
            </section>
        </main>
        <aside class="behind"></aside>
    </div>

    <footer class="taskbar">
        <div class="tasks">
            <button aria-label="Пуск"><svg viewBox="0 0 18 18"><path d="M3 4.500l5-.8V8.500H3zM9 3.500l6-1v6H9zM3 9.500h5v4.800l-5-.8zM9 9.500h6v6l-6-1z" fill="#fff"/></svg></button>
            <button aria-label="Поиск"><svg viewBox="0 0 18 18"><circle cx="10.500" cy="7" r="3.800" fill="none" stroke="#ddd" stroke-width="1.200"/><path d="M8 10l-4 5" stroke="#ddd" stroke-width="1.200"/></svg></button>
            <button aria-label="Просмотр задач"><svg viewBox="0 0 18 18"><path d="M4 4v1h7V4M4 15v-1h7v1M4.500 7h6v4.500h-6zM13.500 3.500v12M13 7h1.500" fill="none" stroke="#ddd"/></svg></button>
            <button aria-label="Paint"><svg viewBox="0 0 18 18"><ellipse cx="8" cy="10.500" rx="6.500" ry="5.500" fill="#dfe5df"/><circle cx="5" cy="9" r="1.300" fill="#4d9ad8"/><circle cx="8" cy="7.500" r="1.300" fill="#5cac50"/><circle cx="11" cy="12" r="1.500" fill="#333"/><circle cx="6" cy="13" r="1.300" fill="#d7b83d"/><path d="M15 2l2 1-5 7-2-1z" fill="#c7a27a"/></svg></button>
            <button aria-label="Панель управления"><svg viewBox="0 0 18 18"><path d="M2 4h14v10H2z" fill="#67b3e6"/><circle cx="6" cy="9" r="2.500" fill="#d9f0ff"/><path d="M10 7h4M10 9.500h4M10 12h4" stroke="#e9f7ff"/></svg></button>
            <button aria-label="3ds Max"><svg viewBox="0 0 18 18"><path d="M1 0h16v18H1z" fill="#48b3b3"/><path d="M4 3h4l6 5-6 6H4l4-6z" fill="#0b4c55"/><path d="M8 3h3l4 5h-2z" fill="#d4f2ee"/><path d="M11 13h4v3h-4z" fill="#d7eeee"/></svg></button>
            <button aria-label="Maya"><svg viewBox="0 0 18 18"><path d="M1 0h16v18H1z" fill="#c9e9e6"/><path d="M5 13V4l4 6 4-6v9" fill="none" stroke="#137f80" stroke-width="2.500"/><path d="M9 16h6" stroke="#137f80"/></svg></button>
            <button class="run" aria-label="AutoCAD"><svg viewBox="0 0 18 18"><path d="M1 0h16v18H1z" fill="#f1dede"/><path d="M4 14L8 3h2l4 11M6 10.500h6" fill="none" stroke="#b92228" stroke-width="2.500"/></svg></button>
            <button aria-label="MSI"><svg viewBox="0 0 18 18"><circle cx="9" cy="9" r="7.300" fill="#2a0909" stroke="#c5262d"/><path d="M5 6l2 1 2-3 2 3 2-1v3l-2 1v3l-2-1-2 1v-3L5 9z" fill="none" stroke="#d5363b" stroke-width="1.200"/></svg></button>
            <button aria-label="Photoshop"><svg viewBox="0 0 18 18"><path d="M2 2h14v14H2z" fill="#0a1840" stroke="#92b8f0"/><text x="9" y="12" class="ps">Ps</text></svg></button>
            <button class="run" aria-label="Opera"><svg viewBox="0 0 18 18"><ellipse cx="9" cy="9" rx="7.500" ry="8" fill="#d61f2c"/><ellipse cx="9" cy="9" rx="3" ry="5.700" fill="#191919"/></svg></button>
            <button class="run" aria-label="Проводник"><svg viewBox="0 0 18 18"><path d="M2 2h6l2 2h6v11H2z" fill="#f1cd67"/><path d="M2 6h14v9H2z" fill="#f8e39b"/><path d="M5 10h8v5h-2v-2H7v2H5z" fill="#59a7d9"/></svg></button>
            <button class="run" aria-label="Viber"><svg viewBox="0 0 18 18"><path d="M4 1h10l3 3v8l-3 3H9l-3 3v-3H4l-3-3V4z" fill="#8069c9"/><path d="M6 4.500c0 4 3 7 6 7.500l1.500-1.500-2-1.500-1 1L8 7.500l1-1-1.500-2zM10.500 4.500c2 0 3 1.500 3 3" fill="none" stroke="#fff"/></svg></button>
            <button class="run" aria-label="Telegram"><svg viewBox="0 0 18 18"><circle cx="8" cy="8" r="7.500" fill="#35a3dc"/><path d="M3 8l10-4-2 9-3-3-1 2v-3z" fill="#fff"/><circle cx="13" cy="13" r="5" fill="#a8a8a8"/><text x="13" y="15" class="count">76</text></svg></button>
            <button class="run" aria-label="Corona"><svg viewBox="0 0 18 18"><path d="M1 1h16v16H1z" fill="#c9141b"/><path d="M17 4h-6c-5 0-7 3-7 5s2 5 7 5h6l-4-2c-4 0-5-2-5-3s1-3 5-3z" fill="#fff"/></svg></button>
            <button class="run" aria-label="Word"><svg viewBox="0 0 18 18"><path d="M8 2h9v14H8z" fill="#eef3fb"/><path d="M11 5h5M11 8h5M11 11h5" stroke="#3a65ad"/><path d="M1 3l9-2v16l-9-2z" fill="#2a5699"/><path d="M3 6l1 5 1.500-4L7 11l1-5" fill="none" stroke="#fff"/></svg></button>
        </div>
        <div class="tray">
            <svg class="ic" viewBox="0 0 12 12"><g fill="none" stroke="#ddd"><circle cx="4" cy="6" r="1.800"/><path d="M1 12c0-5 6-5 6 0"/><circle cx="8.500" cy="2.500" r="1.800"/><path d="M7 6c3-2 5 0 5 2"/></g></svg>
            <svg class="ic up" viewBox="0 0 12 12"><path d="M2 8l4-4 4 4" fill="none" stroke="#ddd"/></svg>
            <svg class="ic" viewBox="0 0 12 12"><path d="M4 2.500h7.500v6H4M6 10.500h4M.5 1.500h3v4h-3zM2 6v5h3" fill="none" stroke="#ddd"/></svg>
            <svg class="ic" viewBox="0 0 12 12"><path d="M1 4.500h2l2-2v7l-2-2H1zM7 4q1.500 2 0 4M8.500 3q2.500 3 0 6M10 2q3 4 0 8" fill="none" stroke="#ccc" stroke-width=".8"/></svg>
            <svg class="ic box" viewBox="0 0 12 12"><path d="M3 1l3 2-3 2-3-2zM9 1l3 2-3 2-3-2zM3 5l3 2-3 2-3-2zM9 5l3 2-3 2-3-2zM6 8l3 2-3 2-3-2z" fill="#e8e8e8"/></svg>
            <span class="lang">РУС</span>
            <div class="clock"><time>21:05</time><time>15.11.2018</time></div>
            <button class="notes" aria-label="Уведомления"><svg viewBox="0 0 18 18"><path d="M1 2h12v9H7l-3 3v-3H1z" fill="#f4f4f4"/><path d="M3 4.500h8M3 7h8" stroke="#222"/><circle cx="12" cy="12" r="5" fill="#333" stroke="#888"/><text x="12" y="15" class="num">2</text></svg></button>
        </div>
    </footer>
</body>
</html>
```

FILE: styles.css
```css
*{
    box-sizing:border-box;
}
body,h2{
    margin:0;
}
body{
    display:flex;
    flex-direction:column;
    height:100vh;
    overflow:hidden;
    background:#000;
    color:#dedede;
    font-family:Roboto,"Open Sans",sans-serif;
    font-size:8px;
    line-height:11px;
    text-rendering:geometricPrecision;
}
button,input,select{
    margin:0;
    padding:0;
    border:none;
    outline:none;
    background:none;
    color:inherit;
    font:inherit;
    text-rendering:inherit;
}
svg{
    display:block;
    flex:none;
}
.sprite{
    position:absolute;
    width:0;
    height:0;
}
.ic{
    width:12px;
    height:12px;
}
.arrow{
    width:5px;
    height:3px;
}
.screen{
    display:flex;
    flex:1;
    min-height:0;
}
.app{
    display:flex;
    flex-direction:column;
    flex:1;
    min-width:0;
}
.behind{
    width:5px;
    background:linear-gradient(#fbfbf0 15px,#dcdcd4 15px,#dcdcd4 42px,#fbfbf0 42px);
    border-left:1px solid #8a8f84;
}

/* заголовок и вкладки */
.top{
    display:flex;
    height:30px;
    background:#484848;
}
.app-button{
    display:flex;
    align-items:center;
    gap:1px;
    width:27px;
    height:27px;
    padding-left:2px;
    background:linear-gradient(#8a8a8a,#4c4c4c);
    border:1px solid #777;
}
.top-main{
    flex:1;
    min-width:0;
}
.titlebar{
    display:flex;
    height:16px;
    background:#fff;
}
.quick{
    display:flex;
    align-items:center;
    gap:4px;
    width:143px;
    padding-left:6px;
    background:linear-gradient(#6c6c6c,#565656);
}
.quick button{
    flex:none;
    width:12px;
}
.quick .arrow{
    width:4px;
}
.quick .more{
    width:6px;
    height:7px;
}
.title{
    display:flex;
    flex:1;
    align-items:center;
    justify-content:center;
    gap:8px;
    color:#111;
    white-space:nowrap;
}
.info{
    display:flex;
    align-items:center;
    gap:4px;
    width:298px;
    background:linear-gradient(#6c6c6c,#565656);
}
.info input{
    width:119px;
    height:14px;
    margin:0 4px 0 -4px;
    padding-left:1px;
    background:#777;
    border:1px solid #4c4c4c;
}
.info ::placeholder{
    color:#c2c2c2;
    font-style:italic;
    opacity:1;
}
.expand{
    display:flex;
    align-items:center;
    justify-content:center;
    width:9px;
    height:16px;
    flex:none;
    background:#666;
}
.login{
    display:flex;
    align-items:center;
    gap:2px;
    white-space:nowrap;
}
.help{
    margin-left:4px;
}
.window-btns{
    display:flex;
    width:109px;
    padding-left:18px;
}
.window-btns button{
    display:flex;
    flex:1;
    align-items:center;
    justify-content:center;
}
.tabs{
    display:flex;
    height:14px;
    padding-left:4px;
    background:linear-gradient(#3e3e3e,#4c4c4c 3px);
    color:#c4c4c4;
}
.tabs button{
    height:14px;
    padding:1px 6px 0;
    white-space:nowrap;
}
.tabs .on{
    background:linear-gradient(#787878,#5c5c5c);
    color:#e6e6e6;
}
.tabs .ribbon-mode{
    display:flex;
    align-items:center;
    gap:4px;
    margin-left:8px;
    padding-top:0;
}

/* лента */
.ribbon{
    display:flex;
    height:66px;
    background:linear-gradient(#4c4c4c,#3a3a3a);
    border-bottom:1px solid #858585;
}
.panel{
    display:flex;
    flex:none;
    flex-direction:column;
    background:linear-gradient(#585858,#525252);
    border-right:1px solid #454545;
    box-shadow:inset 1px 0 #616161;
}
.panel h2{
    display:flex;
    align-items:center;
    justify-content:center;
    gap:4px;
    height:14px;
    background:#4b4b4b;
    font-size:8px;
    font-weight:normal;
    position:relative;
}
.panel h2 svg{
    width:5px;
    height:3px;
}
.launch{
    position:absolute;
    right:2px;
    color:inherit;
    text-decoration:none;
}
.tools{
    display:grid;
    flex:1;
    padding-top:3px;
    white-space:nowrap;
}
.draw{width:174px;}
.draw .tools{grid-template-columns:40px 40px 38px 26px 30px;}
.draw .small{padding-left:5px;}
.modify{width:268px;}
.modify .tools{grid-template-columns:67px 96px 81px 20px;padding-left:4px;}
.annot{width:136px;}
.annot .tools{grid-template-columns:36px 30px 68px;}
.layer{width:223px;}
.layer .tools{grid-template-columns:39px 183px;}
.block{width:60px;}
.block .tools{grid-template-columns:35px 24px;}
.props{width:162px;}
.props .tools{grid-template-columns:55px 104px;}
.groups{width:50px;}
.groups .tools{grid-template-columns:32px 16px;}
.utils{width:71px;}
.utils .tools{grid-template-columns:52px 18px;}
.clip{width:65px;}
.clip .tools{grid-template-columns:48px 16px;}
.view{width:47px;}
.view .tools{grid-template-columns:46px;}
.big{
    display:flex;
    flex-direction:column;
    align-items:center;
    gap:1px;
    white-space:normal;
    text-align:center;
}
.big>svg{
    width:24px;
    height:24px;
}
.big>.arrow{
    width:5px;
    height:3px;
}
.col{
    display:flex;
    flex-direction:column;
}
.row{
    display:flex;
    align-items:center;
    height:16px;
}
.small{
    display:flex;
    align-items:center;
    gap:3px;
    height:16px;
}
.small .ic{
    width:11px;
    height:11px;
}
.small .arrow{
    margin-left:3px;
}
.draw .small .arrow,.block .small .arrow{
    margin-left:0;
}
.row .small{
    min-width:16px;
    padding-left:2px;
}
.block .small,.groups .small,.utils .small,.clip .small{
    padding-left:2px;
}
.groups .small{
    width:15px;
}
.pressed{
    background:#4f7ab4;
    border:1px solid #86a9d8;
    height:14px;
    margin-top:1px;
}
.groups .pressed{
    padding-left:1px;
}
.combo{
    display:flex;
    align-items:center;
    gap:3px;
    width:140px;
    height:14px;
    padding:0 3px;
    margin-bottom:2px;
    background:linear-gradient(#4a4a4a,#5e5e5e);
    border:1px solid #3a3a3a;
}
.combo .ic{
    width:10px;
    height:10px;
}
.combo select{
    flex:1;
    min-width:0;
    appearance:none;
}
.swatch{
    width:9px;
    height:9px;
    background:#fff;
}
.props .row{
    gap:3px;
}
.props .combo{
    width:90px;
    margin-bottom:0;
}
.props .swatch{
    margin:0 2px 0 5px;
}
.rule{
    width:34px;
    height:1px;
    margin-left:2px;
    background:#ddd;
}

/* вкладки файлов */
.files{
    display:flex;
    align-items:flex-end;
    height:19px;
    padding-left:14px;
    background:#353535;
    border-bottom:2px solid #555;
}
.file{
    display:flex;
    align-items:center;
    justify-content:space-between;
    width:83px;
    height:15px;
    padding:0 7px;
    background:#4b4b4b;
    color:#a5a5a5;
    clip-path:polygon(7% 0,93% 0,100% 100%,0 100%);
}
.file.on{
    background:linear-gradient(#6b6b6b,#555);
    color:#eee;
}
.add{
    width:14px;
    height:11px;
    margin:0 0 1px 3px;
    border-radius:3px;
    background:#4d4d4d;
    color:#bbb;
    font-size:11px;
}

/* чертеж */
.canvas{
    position:relative;
    flex:1;
    min-height:0;
    overflow:hidden;
    background:#000;
}
.drawing{
    width:100%;
    height:100%;
    font-family:"Liberation Serif",serif;
}
.ln{
    fill:none;
    stroke:#b4b4b4;
}
.ucs{
    fill:none;
    stroke:#d2d2d2;
}
.tiny{
    fill:#cfcfcf;
    font-size:4px;
    text-anchor:middle;
}
.mid{
    font-size:5px;
}
.bold{
    font-weight:bold;
}
.org{
    font-size:5px;
    text-anchor:start;
}
.stamp{
    fill:#e4e4e4;
    font-size:10px;
    text-anchor:middle;
}
.mdi{
    position:absolute;
    top:6px;
    right:8px;
    display:flex;
    gap:6px;
}
.cube{
    position:absolute;
    top:31px;
    right:16px;
    display:grid;
    grid-template-columns:1fr 34px 1fr;
    grid-template-rows:1fr 34px 1fr;
    width:80px;
    height:80px;
    border:8px solid #2f2f2f;
    border-radius:50%;
    color:#adadad;
    font-size:13px;
    line-height:10px;
    place-items:center;
}
.face{
    grid-area:2/2;
    width:34px;
    height:34px;
    background:#8f8f95;
    border:6px solid #a0a0a2;
    color:#2c2c30;
    font-size:9px;
    white-space:nowrap;
}
.n,.s,.w,.e{
    margin:-8px;
}
.n{grid-area:1/2;align-self:start;}
.s{grid-area:3/2;align-self:end;}
.w{grid-area:2/1;justify-self:start;}
.e{grid-area:2/3;justify-self:end;}
.ucs-name{
    position:absolute;
    top:129px;
    right:41px;
    width:31px;
    height:11px;
    padding-left:2px;
    border-radius:3px;
    background:#85858c;
    border:1px solid #9d9da4;
    color:#333;
    line-height:9px;
    text-align:left;
}
.navbar{
    position:absolute;
    top:158px;
    right:3px;
    width:22px;
    height:141px;
    border-radius:3px;
    background:#484848;
}
.command{
    position:absolute;
    bottom:-7px;
    left:206px;
    right:207px;
    display:flex;
    align-items:center;
    height:17px;
    background:#adadad;
}
.command-tools{
    display:flex;
    align-items:center;
    justify-content:center;
    gap:7px;
    width:36px;
    height:17px;
    background:linear-gradient(#777,#484848);
}
.prompt{
    margin-left:4px;
}
.command input{
    flex:1;
    padding-left:4px;
    font:italic 8px "Liberation Mono",monospace;
}
.command ::placeholder{
    color:#555;
    opacity:1;
}
.command .up{
    margin-right:2px;
}

/* панель задач */
.taskbar{
    display:flex;
    justify-content:space-between;
    height:27px;
    background:#181a1b;
}
.tasks{
    display:grid;
    grid-template-columns:repeat(16,1fr);
    width:523px;
}
.tasks button{
    display:flex;
    align-items:center;
    justify-content:center;
}
.tasks svg{
    width:18px;
    height:20px;
}
.tasks .run{
    background:linear-gradient(#d3e3b4,#d3e3b4) center bottom/26px 2px no-repeat;
}
.ps,.count,.num{
    text-anchor:middle;
    font-size:8px;
    fill:#a8ccff;
}
.count{
    font-size:6px;
    fill:#222;
}
.num{
    fill:#fff;
}
.tray{
    display:flex;
    align-items:center;
    gap:4px;
    padding-right:2px;
    border-right:1px solid #555;
    margin-right:2px;
    color:#e2e2e2;
}
.tray .up{
    margin-left:8px;
}
.tray .box{
    width:10px;
    height:10px;
    margin-left:2px;
}
.lang{
    margin:0 2px;
}
.clock{
    display:flex;
    flex-direction:column;
    align-items:center;
    gap:2px;
}
.notes svg{
    width:18px;
    height:18px;
    margin:0 4px 0 7px;
}
```
